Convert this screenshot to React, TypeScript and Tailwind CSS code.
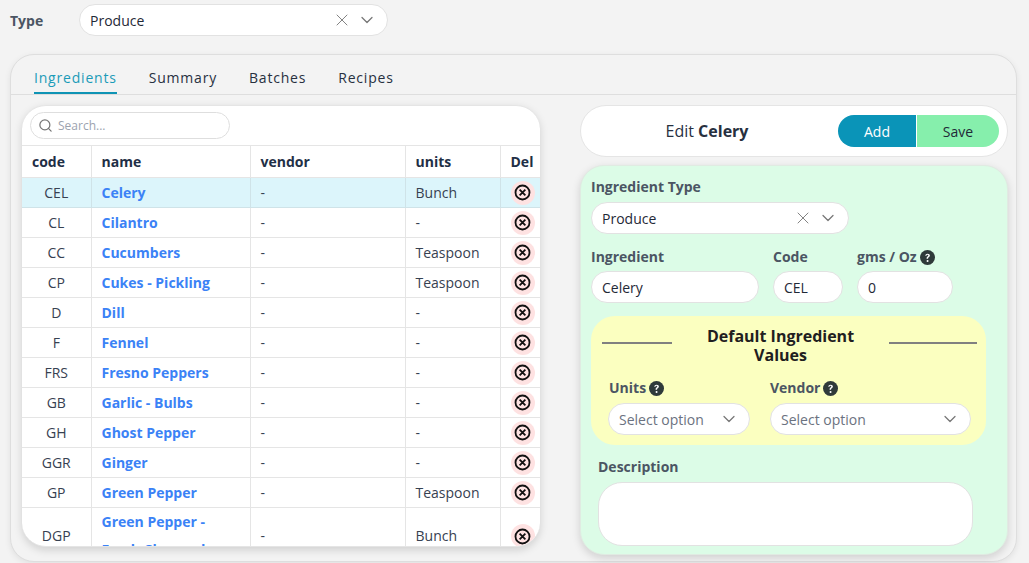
import React from 'react';
import { ChevronDown, Search, X } from 'lucide-react';

const ROWS = [
  { code: 'CEL', name: 'Celery', units: 'Bunch' },
  { code: 'CL', name: 'Cilantro', units: '-' },
  { code: 'CC', name: 'Cucumbers', units: 'Teaspoon' },
  { code: 'CP', name: 'Cukes - Pickling', units: 'Teaspoon' },
  { code: 'D', name: 'Dill', units: '-' },
  { code: 'F', name: 'Fennel', units: '-' },
  { code: 'FRS', name: 'Fresno Peppers', units: '-' },
  { code: 'GB', name: 'Garlic - Bulbs', units: '-' },
  { code: 'GH', name: 'Ghost Pepper', units: '-' },
  { code: 'GGR', name: 'Ginger', units: '-' },
  { code: 'GP', name: 'Green Pepper', units: 'Teaspoon' },
  { code: 'DGP', name: 'Green Pepper - Fresh Chopped', units: 'Bunch' },
];

const HelpIcon = () => (
  <svg viewBox="0 0 24 24" className="w-[15px] h-[15px] shrink-0" fill="#2f3a3a">
    <circle cx="12" cy="12" r="12" />
    <path d="M8.4 9.2c.2-2.2 1.8-3.4 3.8-3.4 2.1 0 3.6 1.2 3.6 3 0 1.3-.7 2-1.7 2.7-.9.6-1.2 1-1.2 1.9v.4h-2.4v-.6c0-1.4.5-2.1 1.5-2.8.8-.6 1.3-.9 1.3-1.6 0-.7-.6-1.2-1.4-1.2-.9 0-1.5.6-1.6 1.6z" fill="#fff" />
    <circle cx="12.1" cy="17.4" r="1.6" fill="#fff" />
  </svg>
);

const DeleteIcon = () => (
  <span className="w-[24px] h-[24px] rounded-full bg-[#fee2e2] flex items-center justify-center ml-[10px]">
    <svg viewBox="0 0 16 16" className="w-[17px] h-[17px]" fill="none" stroke="#111" strokeWidth="1.7">
      <circle cx="8" cy="8" r="6.6" />
      <path d="M5.3 5.3l5.4 5.4M10.7 5.3l-5.4 5.4" />
    </svg>
  </span>
);

const Label = ({ children, className = '' }: { children: React.ReactNode; className?: string }) => (
  <div className={`text-[14px] leading-[20px] font-bold text-[#4b5563] flex items-center gap-[3px] ${className}`}>{children}</div>
);

const SelectBox = ({ value, clear, placeholder, className = '' }: { value: string; clear?: boolean; placeholder?: boolean; className?: string }) => (
  <div className={`h-[32px] rounded-full bg-white border border-[#e2e2e2] flex items-center pl-[10px] pr-[10px] ${className}`}>
    <span className={`flex-1 text-[14px] ${placeholder ? 'text-[#6b7280]' : 'text-[#1f2937]'}`}>{value}</span>
    {clear && <X size={20} strokeWidth={1.1} className="text-[#777] mr-[5px]" />}
    <ChevronDown size={20} strokeWidth={1.5} className="text-[#777]" />
  </div>
);

const TextBox = ({ value, className = '' }: { value: string; className?: string }) => (
  <div className={`h-[32px] rounded-full bg-white border border-[#e2e2e2] flex items-center pl-[10px] text-[14px] text-[#1f2937] ${className}`}>{value}</div>
);

const App: React.FC = () => {
  return (
    <div className="h-[563px] overflow-hidden bg-[#f3f3f3] font-['Open_Sans',sans-serif] text-[#1f2937]">
      {/* Type filter */}
      <div className="flex items-center h-[54px] pl-[10px] pb-[14px]">
        <div className="w-[69px] text-[14px] font-bold text-[#4b5563]">Type</div>
        <SelectBox value="Produce" clear className="w-[309px]" />
      </div>

      <div className="ml-[10px] mr-[12px] h-[508px] rounded-[24px] border border-[#dedede] bg-[#f3f3f3] shadow-[0_2px_6px_rgba(0,0,0,0.08)]">
        {/* Tabs */}
        <div className="h-[40px] border-b border-[#dedede] flex pl-[23px] gap-[32px] text-[14px] tracking-[0.8px] text-[#27303f]">
          <div className="h-[39px] pt-[13px] leading-[20px] border-b-2 border-[#0f94b5] text-[#1b9bb8]">Ingredients</div>
          <div className="pt-[13px] leading-[20px]">Summary</div>
          <div className="pt-[13px] leading-[20px]">Batches</div>
          <div className="pt-[13px] leading-[20px]">Recipes</div>
        </div>

        <div className="flex pl-[11px] pt-[10px]">
          {/* Ingredient table */}
          <div className="w-[518px] h-[442px] rounded-[24px] bg-white border border-[#e5e5e5] border-x-0 overflow-hidden shadow-[0_3px_8px_rgba(0,0,0,0.15)]">
            <div className="h-[39px] flex items-center pl-[8px]">
              <div className="w-[200px] h-[27px] rounded-full border border-[#dedede] flex items-center pl-[7px] gap-[5px]">
                <Search size={15} strokeWidth={2} className="text-[#777]" />
                <span className="text-[12px] text-[#9ca3af]">Search...</span>
              </div>
            </div>
            <table className="w-full table-fixed border-collapse text-[14px]">
              <colgroup>
                <col className="w-[69px]" />
                <col className="w-[159px]" />
                <col className="w-[155px]" />
                <col className="w-[95px]" />
                <col />
              </colgroup>
              <thead>
                <tr className="h-[32px] font-bold text-[#1f2f46]">
                  <th className="border border-[#e5e5e5] border-l-0 text-left pl-[10px] font-bold">code</th>
                  <th className="border border-[#e5e5e5] text-left pl-[10px] font-bold">name</th>
                  <th className="border border-[#e5e5e5] text-left pl-[10px] font-bold">vendor</th>
                  <th className="border border-[#e5e5e5] text-left pl-[10px] font-bold">units</th>
                  <th className="border border-[#e5e5e5] border-r-0 text-left pl-[10px] font-bold">Del</th>
                </tr>
              </thead>
              <tbody>
                {ROWS.map((row, i) => {
                  const line = i === 0 ? 'border-[#cfe3e8]' : 'border-[#e5e5e5]';
                  return (
                    <tr key={row.code} className={i === 0 ? 'h-[30px] bg-[#dcf5fb]' : 'h-[30px]'}>
                      <td className={`border border-l-0 text-center text-[#374151] leading-[20px] ${line}`}>{row.code}</td>
                      <td className={`border pl-[10px] pr-[24px] font-bold text-[#3b82f6] leading-[28px] ${line}`}>{row.name}</td>
                      <td className={`border pl-[10px] text-[#374151] leading-[20px] ${line}`}>-</td>
                      <td className={`border pl-[10px] text-[#374151] leading-[20px] ${line}`}>{row.units}</td>
                      <td className={`border border-r-0 ${line}`}><DeleteIcon /></td>
                    </tr>
                  );
                })}
              </tbody>
            </table>
          </div>

          {/* Edit panel */}
          <div className="w-[428px] ml-[40px] flex flex-col gap-[8px]">
            <div className="h-[52px] rounded-[26px] bg-white border border-[#e5e5e5] flex items-center pr-[8px]">
              <div className="flex-1 text-center text-[16px] text-[#27303f] pr-[5px]">Edit <b className="font-bold">Celery</b></div>
              <button className="w-[78px] h-[32px] rounded-l-full bg-[#0a94b8] text-white text-[14px] mr-px">Add</button>
              <button className="w-[82px] h-[32px] rounded-r-full bg-[#86efac] text-[#1f2937] text-[14px]">Save</button>
            </div>

            <div className="h-[390px] rounded-[24px] bg-[#dcfce7] border border-[#e0ebe2] pl-[10px] pt-[11px] shadow-[0_3px_8px_rgba(0,0,0,0.15)]">
              <Label>Ingredient Type</Label>
              <SelectBox value="Produce" clear className="w-[258px] mt-[5px]" />
              <div className="flex mt-[13px]">
                <div className="w-[168px] mr-[14px]">
                  <Label>Ingredient</Label>
                  <TextBox value="Celery" className="mt-[4px]" />
                </div>
                <div className="w-[70px] mr-[14px]">
                  <Label>Code</Label>
                  <TextBox value="CEL" className="mt-[4px]" />
                </div>
                <div className="w-[96px]">
                  <Label>gms / Oz <HelpIcon /></Label>
                  <TextBox value="0" className="mt-[4px]" />
                </div>
              </div>

              <div className="w-[395px] h-[129px] mt-[13px] rounded-[24px] bg-[#fbffc0] pl-[11px] pt-[11px]">
                <div className="flex items-start">
                  <div className="w-[70px] h-[2px] shrink-0 bg-[#808080] mt-[15px]" />
                  <div className="w-[217px] shrink-0 px-[24px] text-center text-[16px] leading-[19px] font-bold text-[#1f2020]">Default Ingredient Values</div>
                  <div className="w-[88px] h-[2px] shrink-0 bg-[#808080] mt-[15px]" />
                </div>
                <div className="flex mt-[13px] pl-[6px] gap-[20px]">
                  <div className="w-[142px]">
                    <Label className="pl-px">Units <HelpIcon /></Label>
                    <SelectBox value="Select option" placeholder className="mt-[5px]" />
                  </div>
                  <div className="w-[201px]">
                    <Label>Vendor <HelpIcon /></Label>
                    <SelectBox value="Select option" placeholder className="mt-[5px]" />
                  </div>
                </div>
              </div>

              <Label className="mt-[12px] ml-[7px]">Description</Label>
              <div className="w-[375px] h-[64px] mt-[5px] ml-[7px] rounded-[24px] bg-white border border-[#e2e2e2]" />
            </div>
          </div>
        </div>
      </div>
    </div>
  );
};

export default App;
